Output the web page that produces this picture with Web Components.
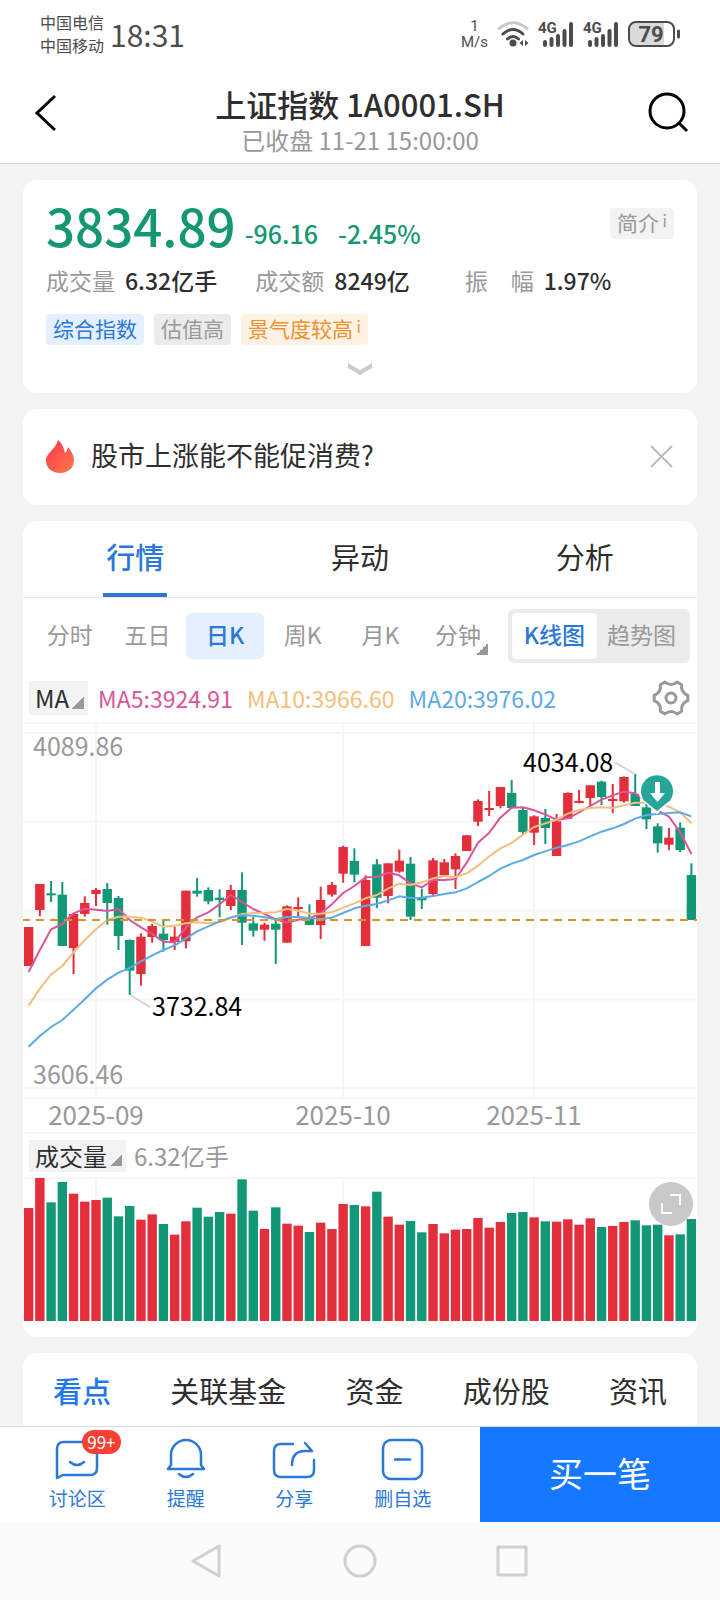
<!DOCTYPE html>
<html lang="zh-CN">
<head>
<meta charset="utf-8">
<meta name="viewport" content="width=device-width, initial-scale=1">
<title>上证指数 1A0001.SH</title>
<style>
  body {
    margin: 0;
    font-family: "Noto Sans CJK SC", sans-serif;
    color: #2e2e2e;
    background: #f4f4f4;
  }
</style>
</head>
<body>
<quote-app></quote-app>

<script>
const RESET = `
  * {
    box-sizing: border-box;
  }
  h1, p, dl, dt, dd, button {
    margin: 0;
    padding: 0;
  }
  button {
    border: 0;
    background: none;
    font: inherit;
    color: inherit;
    white-space: nowrap;
    cursor: pointer;
  }
  svg {
    display: block;
    overflow: visible;
  }
`;

class BaseElement extends HTMLElement {
  constructor() {
    super();
    this.shadowDOM = this.attachShadow({ mode: 'open' });
  }

  connectedCallback() {
    this.render();
  }
}

class StatusBar extends BaseElement {
  signal() {
    return `
      <svg width="36" height="26" viewBox="0 0 36 26" aria-hidden="true">
        <text x="0" y="12" font-size="15" font-weight="700" fill="#4c4c4c">4G</text>
        <path d="M7 24v-3M13.500 24v-6M20 24v-9M26.500 24v-14M33 24V3" stroke="#4c4c4c" stroke-width="4" stroke-linecap="round"/>
      </svg>
    `;
  }

  render() {
    this.shadowDOM.innerHTML = `
      <style>
        ${RESET}
        :host {
          display: flex;
          align-items: center;
          height: 68px;
          padding: 0 40px;
          background: #fff;
          color: #4c4c4c;
        }
        .carriers {
          font-size: 16px;
          line-height: 23px;
        }
        .time {
          flex: 1;
          margin-left: 6px;
          font-size: 30px;
          line-height: 36px;
        }
        .icons {
          display: flex;
          align-items: center;
          gap: 9px;
          font-family: Roboto, sans-serif;
        }
        .speed {
          font-size: 15px;
          line-height: 16px;
          text-align: center;
        }
      </style>
      <div class="carriers"><p>中国电信</p><p>中国移动</p></div>
      <div class="time">18:31</div>
      <div class="icons">
        <div class="speed"><p>1</p><p>M/s</p></div>
        <svg width="32" height="26" viewBox="0 0 32 26" fill="none" stroke-width="3" stroke-linecap="round" aria-hidden="true">
          <path d="M2 7.500Q16-4 30 7.500" stroke="#c9c9c9"/>
          <path d="M6 13Q16 4 26 13M10.500 18Q16 13 21.500 18" stroke="#4c4c4c"/>
          <circle cx="16" cy="22" r="3.500" fill="#4c4c4c"/>
          <path d="M26 19v6l-3.500-3zM28 19v6l3.500-3z" fill="#4c4c4c"/>
        </svg>
        ${this.signal()}
        ${this.signal()}
        <svg width="52" height="26" viewBox="0 0 52 26" aria-hidden="true">
          <path d="M8 2H36V24H8Q2 24 2 18V8Q2 2 8 2Z" fill="#dadada"/>
          <rect x="1" y="1" width="45" height="24" rx="7" fill="none" stroke="#4c4c4c" stroke-width="2"/>
          <path d="M50.500 10v6" stroke="#4c4c4c" stroke-width="3" stroke-linecap="round"/>
          <text x="23" y="21" font-size="22" font-weight="700" text-anchor="middle" fill="#4c4c4c">79</text>
        </svg>
      </div>
    `;
  }
}

class PageHeader extends BaseElement {
  render() {
    this.shadowDOM.innerHTML = `
      <style>
        ${RESET}
        :host {
          display: flex;
          justify-content: space-between;
          padding: 16px 31px 7px;
          background: #fff;
          border-bottom: 1px solid #dcdcdc;
        }
        .heading {
          text-align: center;
        }
        h1 {
          font-size: 31px;
          font-weight: 500;
          line-height: 40px;
        }
        p {
          color: #999;
          font-size: 24px;
          line-height: 32px;
        }
        button {
          height: 58px;
        }
      </style>
      <button aria-label="返回">
        <svg width="40" height="40" viewBox="0 0 40 40" fill="none" stroke="#000" stroke-width="3"><path d="M24 3L6 20L24 37"/></svg>
      </button>
      <div class="heading">
        <h1><slot name="title"></slot></h1>
        <p><slot name="status"></slot></p>
      </div>
      <button aria-label="搜索">
        <svg width="40" height="40" viewBox="0 0 40 40" fill="none" stroke="#000" stroke-width="3"><circle cx="18" cy="18" r="17"/><path d="M30 30l8 8"/></svg>
      </button>
    `;
  }
}

class CardPanel extends BaseElement {
  render() {
    this.shadowDOM.innerHTML = `
      <style>
        :host {
          display: block;
          flex: none;
          background: #fff;
          border-radius: 14px;
          overflow: hidden;
        }
      </style>
      <slot></slot>
    `;
  }
}

class TagChip extends BaseElement {
  render() {
    const info = this.hasAttribute('info') ? '<sup>i</sup>' : '';
    this.shadowDOM.innerHTML = `
      <style>
        ${RESET}
        :host {
          display: block;
        }
        button {
          display: flex;
          padding: 0 7px;
          border-radius: 4px;
          background: #f3f3f3;
          color: #999;
          font-size: 21px;
          line-height: 28px;
          height: 31px;
        }
        sup {
          width: 8px;
          font-size: 16px;
          line-height: 24px;
          text-align: right;
        }
        :host([tone="blue"]) button {
          background: #e5f0ff;
          color: #2b78d8;
        }
        :host([tone="grey"]) button {
          background: #ebebeb;
        }
        :host([tone="orange"]) button {
          background: #fff1e3;
          color: #ee9230;
        }
      </style>
      <button><slot></slot>${info}</button>
    `;
  }
}

class QuoteSummary extends BaseElement {
  render() {
    this.shadowDOM.innerHTML = `
      <style>
        ${RESET}
        :host {
          display: block;
          padding: 19px 23px 18px;
        }
        .top {
          display: flex;
          align-items: center;
          height: 52px;
          color: #149772;
          font-weight: 500;
        }
        .price {
          font-size: 51px;
          line-height: 52px;
        }
        .change {
          align-self: flex-end;
          margin-left: 9px;
          font-size: 25px;
          line-height: 36px;
        }
        .change + .change {
          margin-left: 20px;
        }
        .top tag-chip {
          align-self: flex-end;
          margin: 0 0 12px auto;
          font-weight: 400;
        }
        dl {
          display: grid;
          grid-template-columns: repeat(3, 1fr);
          margin-top: 13px;
          font-size: 23px;
          line-height: 32px;
        }
        dl div {
          display: flex;
          gap: 10px;
        }
        dt {
          color: #999;
        }
        dd {
          font-weight: 500;
        }
        .tags {
          display: flex;
          gap: 10px;
          margin: 18px 0;
        }
        .more {
          display: block;
          height: 12px;
          margin: 0 auto;
        }
      </style>
      <div class="top">
        <span class="price">3834.89</span>
        <span class="change">-96.16</span>
        <span class="change">-2.45%</span>
        <tag-chip info>简介</tag-chip>
      </div>
      <dl>
        <div><dt>成交量</dt><dd>6.32亿手</dd></div>
        <div><dt>成交额</dt><dd>8249亿</dd></div>
        <div><dt>振　幅</dt><dd>1.97%</dd></div>
      </dl>
      <div class="tags">
        <tag-chip tone="blue">综合指数</tag-chip>
        <tag-chip tone="grey">估值高</tag-chip>
        <tag-chip tone="orange" info>景气度较高</tag-chip>
      </div>
      <button class="more" aria-label="展开">
        <svg width="24" height="12" viewBox="0 0 24 12"><path d="M0 0L12 7L24 0V5L12 12L0 5Z" fill="#ccc"/></svg>
      </button>
    `;
  }
}

class HotTopic extends BaseElement {
  render() {
    this.shadowDOM.innerHTML = `
      <style>
        ${RESET}
        :host {
          display: flex;
          align-items: center;
          box-sizing: border-box;
          height: 96px;
          padding: 0 23px;
        }
        p {
          flex: 1;
          margin-left: 17px;
          font-size: 27px;
          line-height: 40px;
          padding-bottom: 4px;
        }
      </style>
      <svg width="28" height="34" viewBox="0 0 28 34" aria-hidden="true">
        <defs>
          <linearGradient id="fire" x1="0" y1="0" x2="1" y2="1">
            <stop offset="0.2" stop-color="#f9434f"/>
            <stop offset="1" stop-color="#ff7a4a"/>
          </linearGradient>
        </defs>
        <path d="M12 0C16 3 18 8 19 13Q21 12 22 7C26 12 28 16 28 20C28 28 22 33 14 33C6 33 0 28 0 20C0 13 10 9 12 0Z" fill="url(#fire)"/>
      </svg>
      <p><slot></slot></p>
      <button aria-label="关闭">
        <svg width="24" height="24" viewBox="0 0 24 24" stroke="#bbb" stroke-width="2"><path d="M1 1L22 22M22 1L1 22"/></svg>
      </button>
    `;
  }
}

const RED = '#e32e3c';
const GREEN = '#129877';
const STEP = 674 / 60;

// [rising, high, low, body top, body bottom], three units to a chart pixel
const CANDLES = [
  [1, 621, 738, 621, 738], [1, 492, 588, 492, 570], [0, 483, 546, 520, 526], [0, 486, 678, 524, 678],
  [1, 582, 762, 582, 684], [1, 529, 590, 549, 582], [1, 504, 558, 510, 522], [0, 489, 614, 507, 549],
  [0, 528, 690, 534, 648], [0, 658, 825, 660, 752], [1, 640, 797, 650, 762], [1, 612, 668, 618, 651],
  [0, 600, 695, 641, 661], [1, 620, 690, 650, 666], [1, 512, 685, 512, 664], [0, 474, 530, 512, 521],
  [0, 502, 553, 510, 544], [0, 508, 592, 533, 540], [1, 495, 570, 510, 558], [0, 457, 675, 510, 608],
  [0, 590, 650, 610, 632], [1, 608, 662, 614, 629], [0, 594, 732, 611, 629], [1, 556, 668, 559, 668],
  [1, 532, 588, 561, 567], [0, 553, 615, 593, 615], [1, 500, 657, 540, 615], [1, 486, 530, 495, 524],
  [1, 377, 488, 381, 461], [0, 385, 487, 423, 464], [1, 466, 678, 480, 678], [0, 417, 564, 433, 533],
  [1, 430, 550, 430, 528], [1, 389, 458, 422, 455], [0, 411, 600, 431, 590], [0, 506, 567, 534, 541],
  [1, 414, 526, 421, 522], [1, 417, 466, 427, 466], [1, 400, 507, 408, 448], [1, 346, 393, 346, 393],
  [1, 238, 318, 243, 305], [1, 213, 288, 264, 270], [1, 201, 265, 201, 258], [0, 180, 264, 219, 264],
  [0, 264, 342, 270, 336], [1, 286, 375, 289, 338], [0, 267, 372, 294, 324], [1, 282, 408, 304, 408],
  [1, 217, 297, 219, 296], [1, 210, 250, 243, 249], [1, 196, 258, 196, 234], [0, 182, 255, 185, 231],
  [1, 192, 279, 237, 243], [1, 169, 248, 171, 244], [0, 162, 258, 222, 258], [0, 250, 327, 262, 298],
  [0, 310, 398, 319, 370], [1, 324, 391, 353, 374], [0, 307, 396, 323, 390], [0, 430, 600, 465, 600],
];

const AVERAGES = [
  {
    color: '#dc5599',
    values: [756, 690, 628, 612, 580, 566, 569, 573, 567, 600, 622, 642, 665, 667, 622, 592, 577, 553, 525, 546,
      567, 582, 598, 608, 599, 595, 580, 553, 519, 498, 472, 471, 458, 466, 490, 502, 480, 480, 477, 428,
      368, 338, 293, 263, 262, 271, 283, 300, 295, 277, 258, 239, 226, 215, 220, 245, 272, 290, 337, 402],
  },
  {
    color: '#f2c07c',
    values: [857, 806, 763, 738, 697, 660, 628, 600, 590, 590, 593, 605, 620, 617, 610, 607, 610, 606, 594, 582,
      579, 579, 577, 567, 572, 581, 581, 577, 563, 550, 535, 525, 506, 491, 495, 487, 475, 469, 471, 460,
      437, 409, 385, 369, 344, 321, 310, 299, 281, 270, 264, 262, 264, 256, 248, 248, 250, 260, 277, 310],
  },
  {
    color: '#5caae6',
    values: [980, 948, 921, 900, 869, 838, 805, 779, 758, 744, 724, 706, 690, 676, 655, 634, 619, 605, 592, 586,
      587, 592, 598, 591, 591, 594, 597, 593, 579, 565, 557, 552, 541, 529, 534, 533, 528, 522, 517, 505,
      486, 468, 446, 431, 420, 405, 394, 383, 375, 364, 349, 335, 325, 312, 296, 285, 282, 279, 277, 289],
  },
];

const VOLUMES = [
  339, 429, 356, 417, 382, 358, 363, 370, 314, 345, 304, 320, 291, 259, 299, 340, 313, 327, 322, 425,
  331, 276, 341, 292, 286, 267, 295, 276, 351, 348, 344, 388, 313, 289, 300, 266, 291, 263, 274, 276,
  309, 280, 297, 324, 327, 311, 299, 298, 305, 289, 308, 282, 285, 297, 302, 287, 289, 257, 260, 306,
];

const toY = (value) => value / 3 - 3;
const toX = (index) => STEP * (index + 0.5);

class CandleChart extends BaseElement {
  render() {
    const candles = CANDLES.map(([rising, high, low, top, bottom], i) => `
      <g fill="${rising ? RED : GREEN}">
        <rect x="${toX(i) - 1}" y="${toY(high)}" width="2" height="${(low - high) / 3}"/>
        <rect x="${toX(i) - 4.7}" y="${toY(top)}" width="9.400" height="${(bottom - top) / 3}"/>
      </g>
    `).join('');

    const lines = AVERAGES.map(({ color, values }) => `
      <polyline points="${values.map((v, i) => `${toX(i)},${toY(v)}`).join(' ')}"
        fill="none" stroke="${color}" stroke-width="2" stroke-linejoin="round"/>
    `).join('');

    this.shadowDOM.innerHTML = `
      <style>
        ${RESET}
        :host {
          display: block;
        }
        svg {
          width: 100%;
          height: auto;
        }
        text {
          font-size: 25px;
          fill: #999;
        }
        .mark {
          fill: #000;
        }
        .month {
          font-size: 26px;
        }
      </style>
      <svg viewBox="0 0 674 410" role="img" aria-label="日K线图">
        <path d="M0 0H674M0 10H674M0 98.500H674M0 187.500H674M0 276.500H674M0 365H674M0 375H674M0 410H674M73 1V375M320 1V375M511 1V375"
          fill="none" stroke="#f6f6f6" stroke-width="2"/>
        ${candles}
        ${lines}
        <path d="M-1 197H674" stroke="#d9942f" stroke-width="2" stroke-dasharray="8 6"/>
        <path d="M592 39.500L612 51M108 272.500L127 284" stroke="#d4d4d4" stroke-width="2"/>
        <path d="M634 91L619 77A19 19 0 1 1 649 77Z" fill="#fff"/>
        <path d="M634 88L621 77.500A16 16 0 1 1 647 77.500Z" fill="#26a69a"/>
        <path d="M632 59h5v11h5l-7.500 9l-7.500-9h5z" fill="#fff"/>
        <text x="10" y="33">4089.86</text>
        <text x="10" y="361">3606.46</text>
        <text class="mark" x="500" y="49">4034.08</text>
        <text class="mark" x="129" y="293">3732.84</text>
        <text class="month" x="73" y="402" text-anchor="middle">2025-09</text>
        <text class="month" x="320" y="402" text-anchor="middle">2025-10</text>
        <text class="month" x="511" y="402" text-anchor="middle">2025-11</text>
      </svg>
    `;
  }
}

class VolumeChart extends BaseElement {
  render() {
    const bars = VOLUMES.map((v, i) => `
      <rect x="${toX(i) - 4.7}" y="${143 - v / 3}" width="9.400" height="${v / 3}" fill="${CANDLES[i][0] ? RED : GREEN}"/>
    `).join('');

    this.shadowDOM.innerHTML = `
      <style>
        ${RESET}
        :host {
          display: block;
          position: relative;
        }
        svg {
          width: 100%;
          height: auto;
        }
        button {
          position: absolute;
          top: 4px;
          right: 4px;
          width: 44px;
          height: 44px;
          border-radius: 50%;
          background: #c9c9c9;
        }
      </style>
      <svg viewBox="0 0 674 143" role="img" aria-label="成交量">
        <path d="M0 0H674M73 1V143M320 1V143M511 1V143" stroke="#f6f6f6" stroke-width="2"/>
        ${bars}
      </svg>
      <button aria-label="全屏">
        <svg viewBox="0 0 44 44" fill="none" stroke="#fff" stroke-width="2"><path d="M21 13H31V23M13 21V31H23"/></svg>
      </button>
    `;
  }
}

class MarketPanel extends BaseElement {
  render() {
    const periods = ['分时', '五日', '日K', '周K', '月K', '分钟'].map((name) => `
      <button class="${name === '日K' ? 'active' : ''} ${name === '分钟' ? 'menu' : ''}">${name}</button>
    `).join('');

    this.shadowDOM.innerHTML = `
      <style>
        ${RESET}
        :host {
          display: block;
          padding-bottom: 16px;
        }
        .tabs {
          display: grid;
          grid-template-columns: repeat(3, 1fr);
          border-bottom: 1px solid #e8e8e8;
        }
        .tabs button {
          justify-self: center;
          height: 76px;
          padding: 0 3px 3px;
          font-size: 29px;
          border-bottom: 4px solid transparent;
        }
        .tabs .active {
          color: #2b78d8;
          font-weight: 500;
          border-color: #2b78d8;
        }
        .periods {
          display: flex;
          align-items: center;
          padding: 11px 7px 9px 8px;
          color: #999;
          font-size: 23px;
        }
        .periods > button {
          flex: 1;
          height: 46px;
          padding-bottom: 4px;
          border-radius: 6px;
        }
        .periods > .active {
          background: #e5f0ff;
          color: #2b78d8;
          font-weight: 500;
        }
        .menu {
          background: linear-gradient(135deg, transparent 50%, #999 50%) calc(50% + 24px) calc(100% - 4px) / 12px 12px no-repeat;
        }
        .switch {
          display: flex;
          margin-left: 11px;
          padding: 4px;
          border-radius: 6px;
          background: #ebebeb;
        }
        .switch button {
          height: 46px;
          padding: 0 10px 4px;
          border-radius: 4px;
        }
        .switch .active {
          padding: 0 12px 4px;
          background: #fff;
          color: #2b78d8;
          font-weight: 500;
        }
        .legend {
          display: flex;
          align-items: center;
          gap: 14px;
          height: 51px;
          padding: 0 6px;
          font-size: 23px;
          line-height: 32px;
        }
        .legend .picker {
          margin-right: -4px;
        }
        .picker {
          display: flex;
          align-items: flex-end;
          gap: 3px;
          padding: 0 4px 0 6px;
          background: #f3f3f3;
          color: #2e2e2e;
          font-size: 24px;
          line-height: 34px;
        }
        .picker::after {
          content: "";
          width: 12px;
          height: 12px;
          margin-bottom: 6px;
          background: linear-gradient(135deg, transparent 50%, #999 50%);
        }
        .gear {
          margin-left: auto;
        }
        .volume {
          display: flex;
          align-items: center;
          gap: 8px;
          height: 45px;
          padding: 0 6px;
          color: #999;
          font-size: 24px;
          line-height: 32px;
        }
        .volume .picker {
          line-height: 32px;
        }
      </style>
      <nav class="tabs">
        <button class="active">行情</button>
        <button>异动</button>
        <button>分析</button>
      </nav>
      <div class="periods">
        ${periods}
        <div class="switch">
          <button class="active">K线图</button>
          <button>趋势图</button>
        </div>
      </div>
      <div class="legend">
        <button class="picker">MA</button>
        <span style="color: #dc5599">MA5:3924.91</span>
        <span style="color: #f2c07c">MA10:3966.60</span>
        <span style="color: #5caae6">MA20:3976.02</span>
        <button class="gear" aria-label="指标设置">
          <svg width="40" height="40" viewBox="-20 -20 40 40" fill="none" stroke="#999" stroke-width="3" stroke-linejoin="round">
            <path d="M16.800-2.700V2.700Q9.500 5.500 10.700 13.200L6.100 15.900Q0 11-6.100 15.900L-10.700 13.200Q-9.500 5.500-16.800 2.700V-2.700Q-9.500-5.500-10.700-13.200L-6.100-15.900Q0-11 6.100-15.900L10.700-13.200Q9.500-5.500 16.800-2.700Z"/>
            <circle r="5"/>
          </svg>
        </button>
      </div>
      <candle-chart></candle-chart>
      <div class="volume">
        <button class="picker">成交量</button>
        <span>6.32亿手</span>
      </div>
      <volume-chart></volume-chart>
    `;
  }
}

class InfoTabs extends BaseElement {
  render() {
    this.shadowDOM.innerHTML = `
      <style>
        ${RESET}
        :host {
          display: flex;
          justify-content: space-between;
          padding: 17px 30px 24px;
          font-size: 29px;
          line-height: 40px;
        }
        .active {
          color: #1f77f0;
          font-weight: 500;
        }
      </style>
      <button class="active">看点</button>
      <button>关联基金</button>
      <button>资金</button>
      <button>成份股</button>
      <button>资讯</button>
    `;
  }
}

const ACTION_ICONS = {
  comment: '<path d="M2 40V11Q2 4 9 4H35Q42 4 42 11V30Q42 37 35 37H8L2 40Z"/><path d="M15 24Q22 30 29 24"/>',
  bell: '<path d="M7 27V17A15 15 0 0 1 37 17V27L40 31H4Z"/><path d="M15 36Q22 42 29 36"/>',
  share: '<path d="M21 6H9Q2 6 2 13V32Q2 39 9 39H35Q42 39 42 32V22"/><path d="M20 27Q20 13 33 13H40L33 5"/>',
  remove: '<rect x="2" y="2" width="39" height="39" rx="8"/><path d="M14 21.500H29"/>',
};

class ActionItem extends BaseElement {
  render() {
    const badge = this.getAttribute('badge');
    this.shadowDOM.innerHTML = `
      <style>
        ${RESET}
        :host {
          display: block;
          flex: 1;
        }
        button {
          display: block;
          position: relative;
          width: 100%;
          padding-top: 11px;
          color: #2b78d8;
          font-size: 19px;
          line-height: 28px;
        }
        svg {
          margin: 0 auto 2px;
        }
        .badge {
          position: absolute;
          top: 3px;
          left: 50%;
          margin-left: 5px;
          padding: 0 5px;
          border-radius: 12px;
          background: #fb3f33;
          color: #fff;
          font-size: 17px;
          line-height: 24px;
        }
      </style>
      <button>
        <svg width="44" height="44" viewBox="0 0 44 44" fill="none" stroke="currentColor" stroke-width="2.500" stroke-linecap="round" stroke-linejoin="round" aria-hidden="true">${ACTION_ICONS[this.getAttribute('icon')]}</svg>
        ${badge ? `<span class="badge">${badge}</span>` : ''}
        <slot></slot>
      </button>
    `;
  }
}

class ActionBar extends BaseElement {
  render() {
    this.shadowDOM.innerHTML = `
      <style>
        ${RESET}
        :host {
          display: grid;
          grid-template-columns: 2fr 1fr;
          height: 96px;
          background: #fff;
          border-top: 1px solid #dcdcdc;
        }
        .items {
          display: flex;
          padding: 0 23px;
        }
        .buy {
          padding-bottom: 4px;
          background: #1677ff;
          color: #fff;
          font-size: 34px;
        }
      </style>
      <div class="items"><slot></slot></div>
      <button class="buy">买一笔</button>
    `;
  }
}

class SystemNav extends BaseElement {
  render() {
    this.shadowDOM.innerHTML = `
      <style>
        ${RESET}
        :host {
          display: flex;
          justify-content: center;
          align-items: center;
          gap: 116px;
          height: 78px;
          background: #fbfbfb;
        }
      </style>
      <button aria-label="返回"><svg width="36" height="36" viewBox="0 0 36 36" fill="none" stroke="#d0d0d0" stroke-width="3" stroke-linejoin="round"><path d="M29 3V33L3 18Z"/></svg></button>
      <button aria-label="主页"><svg width="36" height="36" viewBox="0 0 36 36" fill="none" stroke="#d0d0d0" stroke-width="3"><circle cx="18" cy="18" r="15"/></svg></button>
      <button aria-label="最近任务"><svg width="36" height="36" viewBox="0 0 36 36" fill="none" stroke="#d0d0d0" stroke-width="3" stroke-linejoin="round"><rect x="4" y="4" width="28" height="28"/></svg></button>
    `;
  }
}

class QuoteApp extends BaseElement {
  render() {
    this.shadowDOM.innerHTML = `
      <style>
        ${RESET}
        :host {
          display: flex;
          flex-direction: column;
          height: 100vh;
        }
        main {
          display: flex;
          flex-direction: column;
          flex: 1;
          gap: 16px;
          min-height: 0;
          padding: 16px 23px 0;
          overflow: hidden;
        }
      </style>
      <status-bar></status-bar>
      <page-header>
        <span slot="title">上证指数 1A0001.SH</span>
        <span slot="status">已收盘 11-21 15:00:00</span>
      </page-header>
      <main>
        <card-panel><quote-summary></quote-summary></card-panel>
        <card-panel><hot-topic>股市上涨能不能促消费?</hot-topic></card-panel>
        <card-panel><market-panel></market-panel></card-panel>
        <card-panel><info-tabs></info-tabs></card-panel>
      </main>
      <action-bar>
        <action-item icon="comment" badge="99+">讨论区</action-item>
        <action-item icon="bell">提醒</action-item>
        <action-item icon="share">分享</action-item>
        <action-item icon="remove">删自选</action-item>
      </action-bar>
      <system-nav></system-nav>
    `;
  }
}

customElements.define('status-bar', StatusBar);
customElements.define('page-header', PageHeader);
customElements.define('card-panel', CardPanel);
customElements.define('tag-chip', TagChip);
customElements.define('quote-summary', QuoteSummary);
customElements.define('hot-topic', HotTopic);
customElements.define('candle-chart', CandleChart);
customElements.define('volume-chart', VolumeChart);
customElements.define('market-panel', MarketPanel);
customElements.define('info-tabs', InfoTabs);
customElements.define('action-item', ActionItem);
customElements.define('action-bar', ActionBar);
customElements.define('system-nav', SystemNav);
customElements.define('quote-app', QuoteApp);
</script>
</body>
</html>
